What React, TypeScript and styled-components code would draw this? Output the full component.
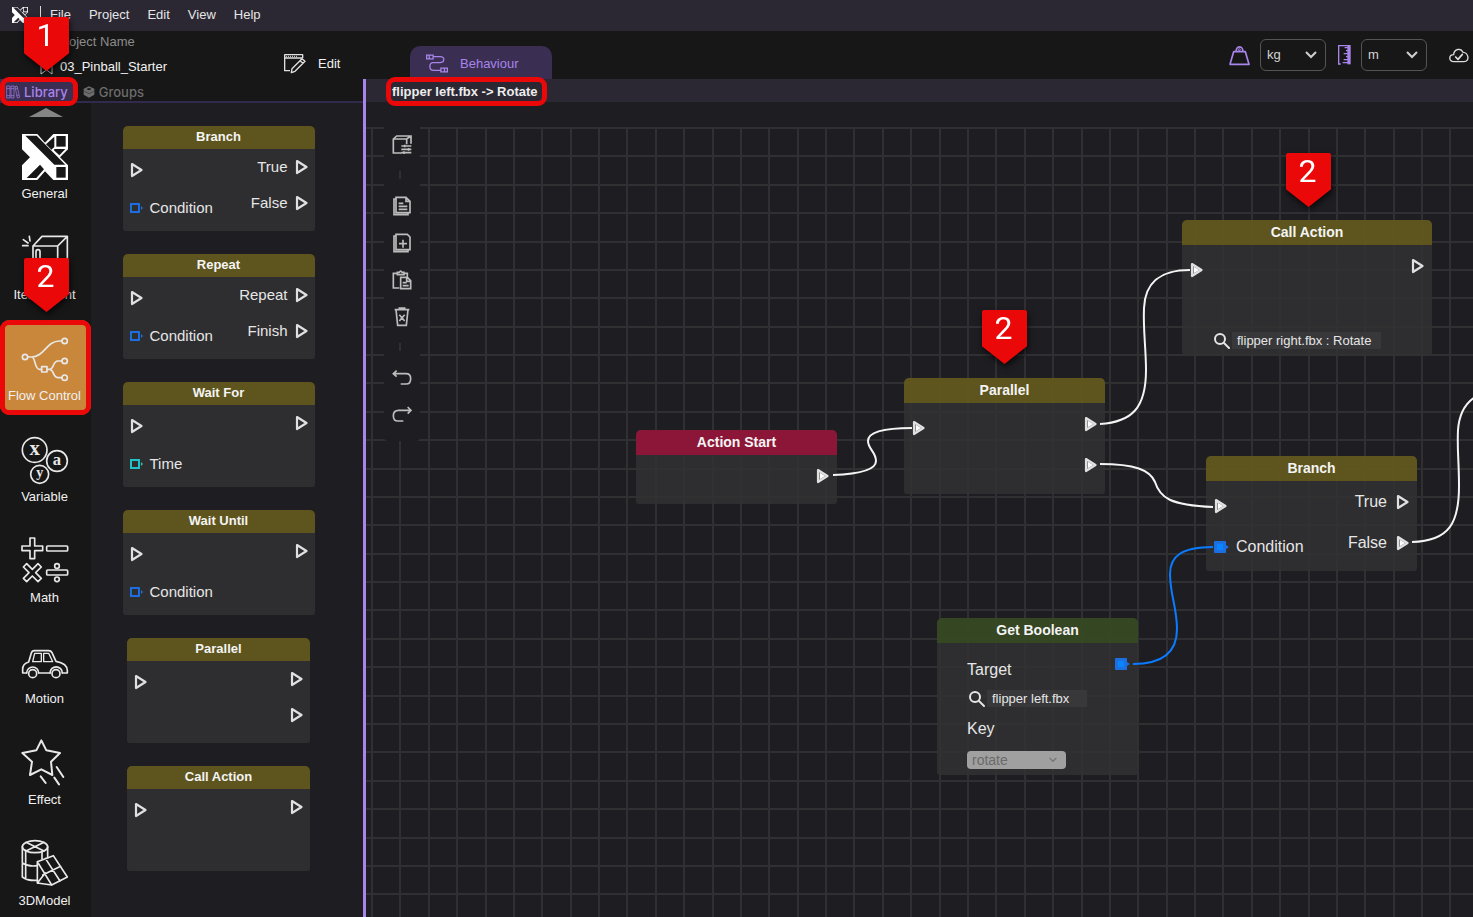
import React from "react";
import styled, { createGlobalStyle, css } from "styled-components";

const GRID_STEP = 28.38;

const colors = {
  menu: "#2b2833",
  header: "#171717",
  canvas: "#1e1d22",
  line: "#303033",
  violet: "#a885ea",
  violetDark: "#3a2e52",
  olive: "rgba(97, 86, 28, 0.96)",
  crimson: "#8c1637",
  green: "rgba(54, 72, 34, 0.96)",
  red: "#ea0808",
  blue: "#1b6fe0",
  cyan: "#20c4c4",
  text: "#e6e6e6",
};

const GlobalStyle = createGlobalStyle`
  *, *::before, *::after { box-sizing: border-box; }
  body {
    margin: 0;
    background: ${colors.canvas};
    color: ${colors.text};
    font-family: "Liberation Sans", Arial, sans-serif;
    font-size: 13px;
    line-height: 16px;
    overflow: hidden;
  }
  button, select, input { font: inherit; color: inherit; }
  button { background: none; border: 0; padding: 0; cursor: pointer; }
  svg { display: block; flex: none; }
`;

/* ---------- page frame ---------- */

const Page = styled.div`
  display: flex;
  flex-direction: column;
  height: 100vh;
`;

const MenuBar = styled.nav`
  display: flex;
  align-items: center;
  flex: none;
  height: 31px;
  padding: 0 12px 1px;
  background: ${colors.menu};
`;

const MenuDivider = styled.span`
  width: 1px;
  height: 18px;
  margin: 0 9px 0 12px;
  background: #d8d8d8;
`;

const MenuList = styled.div`
  display: flex;
  gap: 18px;
`;

const Header = styled.header`
  display: flex;
  flex: none;
  height: 48px;
  background: ${colors.header};
`;

const ProjectInfo = styled.div`
  position: relative;
  display: flex;
  flex-direction: column;
  justify-content: center;
  gap: 8px;
  width: 284px;
  padding-left: 39px;
`;

const ProjectCaption = styled.span`
  padding-left: 17px;
  color: #8c8c8c;
`;

const ProjectName = styled.span`
  display: flex;
  align-items: center;
  gap: 6px;
  color: #f2f2f2;
`;

const EditButton = styled.button`
  display: flex;
  align-items: center;
  gap: 12px;
  width: 126px;
  padding-top: 17px;
  color: #f0f0f0;
`;

const ModeTab = styled.button`
  display: flex;
  align-items: center;
  align-self: flex-end;
  gap: 12px;
  width: 142px;
  height: 33px;
  padding: 2px 0 0 16px;
  border-radius: 10px 10px 0 0;
  background: ${colors.violetDark};
  color: ${colors.violet};
`;

const UnitTools = styled.div`
  display: flex;
  align-items: center;
  margin-left: auto;
  padding-right: 4px;
`;

const UnitField = styled.label`
  position: relative;
  display: flex;
  align-items: center;
  gap: 10px;
  margin-right: 12px;
`;

const UnitSelect = styled.select`
  appearance: none;
  width: 66px;
  height: 32px;
  padding: 0 6px;
  border: 1px solid #555;
  border-radius: 6px;
  background: ${colors.header};
  color: #d4d4d4;
`;

const SelectArrow = styled.svg`
  position: absolute;
  right: 9px;
  top: 50%;
  translate: 0 -50%;
  pointer-events: none;
`;

const CloudButton = styled.button`
  padding-left: 10px;
`;

const Workspace = styled.div`
  display: flex;
  flex: 1;
  min-height: 0;
`;

/* ---------- left panel ---------- */

const LeftPanel = styled.aside`
  display: flex;
  flex-direction: column;
  flex: none;
  width: 366px;
  border-right: 3px solid ${colors.violet};
`;

const PanelTabs = styled.div`
  position: relative;
  display: flex;
  align-items: center;
  flex: none;
  gap: 9px;
  height: 24px;
  border-bottom: 2px solid #322a4c;
  background: ${colors.header};
`;

const PanelTab = styled.button<{ $active?: boolean }>`
  display: flex;
  align-items: center;
  gap: 4px;
  height: 22px;
  padding: ${(p) => (p.$active ? "3px 6px 0" : "3px 0 0")};
  font-family: Inter, sans-serif;
  font-weight: 500;
  color: ${(p) => (p.$active ? colors.violet : "#6c6c6c")};
  background: ${(p) => (p.$active ? colors.violetDark : "none")};
`;

const PanelBody = styled.div`
  display: flex;
  flex: 1;
  min-height: 0;
  overflow: hidden;
`;

const CategoryRail = styled.div`
  display: flex;
  flex-direction: column;
  align-items: center;
  gap: 6px;
  flex: none;
  width: 91px;
  background: ${colors.header};
`;

const ScrollUp = styled.button`
  display: flex;
  align-items: center;
  justify-content: center;
  flex: none;
  width: 100%;
  height: 9px;
  padding-top: 9px;
`;

const Category = styled.button<{ $active?: boolean }>`
  position: relative;
  display: flex;
  flex-direction: column;
  align-items: center;
  flex: none;
  gap: 6px;
  width: 100%;
  height: 95px;
  padding: 16px 2px 0 0;
  white-space: nowrap;
  color: #f0f0f0;
  border-radius: 10px;
  background: ${(p) => (p.$active ? "#c8873b" : "transparent")};
`;

const BlockList = styled.div`
  display: flex;
  flex-direction: column;
  align-items: center;
  gap: 23px;
  flex: 1;
  padding: 23px 17px 0 0;
  overflow: hidden;
`;

/* ---------- nodes ---------- */

const NodeFrame = styled.article<{ $w: number; $h: number; $large?: boolean; $x?: number; $y?: number }>`
  display: flex;
  flex-direction: column;
  flex: none;
  width: ${(p) => p.$w}px;
  height: ${(p) => p.$h}px;
  border-radius: 5px 5px 3px 3px;
  overflow: hidden;
  background: rgba(49, 49, 50, 0.88);
  font-size: ${(p) => (p.$large ? 16 : 15)}px;
  ${(p) =>
    p.$large &&
    css`
      position: absolute;
      left: ${p.$x}px;
      top: ${p.$y}px;
    `}
`;

const NodeTitle = styled.h3<{ $tone: string; $large?: boolean }>`
  flex: none;
  margin: 0;
  height: ${(p) => (p.$large ? 25 : 23)}px;
  line-height: ${(p) => (p.$large ? 25 : 22)}px;
  font-size: ${(p) => (p.$large ? 14 : 13)}px;
  font-weight: 700;
  text-align: center;
  color: #f4f4f4;
  background: ${(p) => p.$tone};
`;

const NodeBody = styled.div<{ $large?: boolean }>`
  display: flex;
  justify-content: space-between;
  padding: 0 ${(p) => (p.$large ? 8 : 7)}px;
`;

const PortColumn = styled.div<{ $side: "in" | "out"; $large?: boolean }>`
  display: flex;
  flex-direction: column;
  align-items: ${(p) => (p.$side === "in" ? "flex-start" : "flex-end")};
  padding-top: ${(p) => (p.$side === "out" ? 0 : p.$large ? 4 : 2)}px;
`;

const PortRow = styled.div<{ $side: "in" | "out"; $large?: boolean }>`
  display: flex;
  align-items: center;
  gap: ${(p) => (p.$side === "out" && p.$large ? 9 : 7)}px;
  height: ${(p) => (p.$large ? 41 : p.$side === "in" ? 38 : 36)}px;
`;

const NodeForm = styled.div<{ $top: number }>`
  display: flex;
  flex-direction: column;
  align-items: flex-start;
  gap: 12px;
  padding: ${(p) => p.$top}px 0 0 30px;
  line-height: 20px;
`;

const TargetHeading = styled.div`
  display: flex;
  justify-content: space-between;
  align-items: flex-start;
  padding: 15px 8px 0 30px;
  line-height: 24px;
`;

const TargetRow = styled.div`
  display: flex;
  align-items: center;
  gap: 2px;
  padding-left: 2px;
`;

const TargetValue = styled.button<{ $w: number }>`
  width: ${(p) => p.$w}px;
  height: 17px;
  padding-left: 5px;
  text-align: left;
  font-size: 13px;
  line-height: 17px;
  background: #38383a;
`;

const KeyField = styled.span`
  position: relative;
  display: flex;
`;

const KeySelect = styled.select`
  appearance: none;
  width: 99px;
  height: 18px;
  padding: 0 5px;
  border: 0;
  border-radius: 4px;
  background: #a0a0a0;
  color: #6a6a6a;
  font-size: 14px;
  line-height: 18px;
`;

/* ---------- canvas ---------- */

const CanvasPane = styled.main`
  display: flex;
  flex-direction: column;
  flex: 1;
  min-width: 0;
`;

const Breadcrumb = styled.div`
  position: relative;
  z-index: 2;
  display: flex;
  align-items: center;
  flex: none;
  height: 23px;
  padding: 2px 0 0 26px;
  background: ${colors.menu};
  font-weight: 700;
  color: #ededed;
`;

const Board = styled.div`
  position: relative;
  flex: 1;
  overflow: hidden;
  background: ${colors.canvas};
`;

const BoardLayer = styled.svg`
  position: absolute;
  inset: 0;
  width: 100%;
  height: 100%;
`;

const ToolRail = styled.div`
  position: absolute;
  left: 18px;
  top: 16px;
  display: flex;
  flex-direction: column;
  gap: 8px;
`;

const ToolGroup = styled.div`
  display: flex;
  flex-direction: column;
  padding: 8px 0;
  border-radius: 4px;
  background: ${colors.canvas};
`;

const ToolButton = styled.button`
  display: flex;
  align-items: center;
  justify-content: center;
  width: 36px;
  height: 37px;
`;

/* ---------- tutorial callouts ---------- */

const Outline = styled.span<{ $x: number; $y: number; $w: number; $h: number }>`
  position: absolute;
  z-index: 3;
  left: ${(p) => p.$x}px;
  top: ${(p) => p.$y}px;
  width: ${(p) => p.$w}px;
  height: ${(p) => p.$h}px;
  border: 5px solid ${colors.red};
  border-radius: 9px;
  pointer-events: none;
`;

const Pin = styled.span<{ $x: number; $y: number }>`
  position: absolute;
  z-index: 4;
  left: ${(p) => p.$x}px;
  top: ${(p) => p.$y}px;
  width: 45px;
  height: 54px;
  padding-right: 2px;
  filter: drop-shadow(1px 3px 3px rgba(0, 0, 0, 0.7));
  font-family: Roboto, sans-serif;
  font-size: 32px;
  line-height: 36px;
  text-align: center;
  color: #fff;
  pointer-events: none;

  &::before {
    content: "";
    position: absolute;
    inset: 0;
    z-index: -1;
    background: ${colors.red};
    border-radius: 2px;
    clip-path: polygon(0 0, 100% 0, 100% 67%, 50% 100%, 0 67%);
  }
`;

/* ---------- icons ---------- */

const BrandMark = ({ size, dark }: { size: number; dark: string }) => (
  <svg width={size} height={size} viewBox="0 0 138 138" aria-hidden="true">
    <path fill="#fff" d="M0 0H46L69 26L94 0H138V46L114 70L138 94V138H94L69 112L46 138H0V94L24 70L0 46Z" />
    <g fill={dark}>
      <path d="M10 5H44L130 92H97Z" />
      <path d="M14 132L54 92L66 106L43 132Z" />
      <path d="M103 6H131V38H103Z" />
      <path d="M97 8V39L88 47L72 31Z" />
      <path d="M98 45H130L112 64L95 48Z" />
      <path d="M103 99H131V131H103Z" />
    </g>
  </svg>
);

const RailIcon = ({ y, children }: { y: number; children: React.ReactNode }) => (
  <svg
    width="46"
    height="46"
    viewBox={`66 ${y} 138 138`}
    overflow="visible"
    fill="none"
    stroke="#e8e8e8"
    strokeWidth="5"
    strokeLinejoin="round"
    strokeLinecap="round"
    aria-hidden="true"
  >
    {children}
  </svg>
);

const ItemIcon = () => (
  <RailIcon y={404}>
    <path d="M99 437L126 408H202V500L173 530H99ZM99 437H173L202 408M173 437V530M108 475V454Q108 448 114 448Q120 448 120 454V475M68 436H84M70 418L84 428M88 408L90 422" />
  </RailIcon>
);

const FlowIcon = () => (
  <RailIcon y={80}>
    <circle cx="75" cy="143" r="8" />
    <circle cx="194" cy="95" r="8" />
    <circle cx="194" cy="155" r="8" />
    <circle cx="194" cy="205" r="8" />
    <rect x="125" y="172" width="16" height="16" />
    <path d="M83 143H95C132 143 140 95 178 95H186M95 143C107 143 103 180 118 180H125M141 180H149C162 180 158 155 174 155H186M149 180C162 180 158 205 174 205H186" />
  </RailIcon>
);

const VariableIcon = () => (
  <RailIcon y={378}>
    <circle cx="104" cy="417" r="37" />
    <circle cx="171" cy="450" r="31" />
    <circle cx="119" cy="490" r="27" />
    <g fill="#e8e8e8" stroke="none" fontFamily="Liberation Serif, serif" fontWeight="700" textAnchor="middle">
      <text x="104" y="432" fontSize="62">x</text>
      <text x="171" y="462" fontSize="50">a</text>
      <text x="119" y="498" fontSize="42">y</text>
    </g>
  </RailIcon>
);

const MathIcon = () => {
  const plus = "M-7 -31H7V-7H31V7H7V31H-7V7H-31V-7H-7Z";
  return (
    <RailIcon y={53}>
      <path transform="translate(97 84)" d={plus} />
      <path transform="translate(97 157) rotate(45)" d={plus} />
      <rect x="140" y="77" width="63" height="15" rx="3" />
      <rect x="140" y="149" width="63" height="15" rx="3" />
      <circle cx="171" cy="137" r="7" />
      <circle cx="171" cy="177" r="7" />
    </RailIcon>
  );
};

const CarIcon = () => (
  <RailIcon y={355}>
    <path d="M80 457H68V446C68 432 75 427 86 424L94 397Q96 390 103 390H146Q153 390 156 396L168 422C192 426 202 435 202 450V457H187M116 457H151" />
    <path d="M98 423L104 398H124V423ZM131 398H146L158 423H131Z" strokeWidth="4" />
    <path d="M80 457A18 18 0 0 1 116 457M150 457A18 18 0 0 1 187 457" />
    <circle cx="98" cy="459" r="12" />
    <circle cx="168" cy="459" r="12" />
  </RailIcon>
);

const StarIcon = () => (
  <RailIcon y={59}>
    <path d="M124 60L139 90L180 98L153 124L157 164L124 147L90 164L96 124L67 98L109 90Z" strokeWidth="6" />
    <path d="M122 168L137 188M163 172L177 192M170 140L190 170" strokeWidth="6" />
  </RailIcon>
);

const ModelIcon = () => (
  <RailIcon y={360}>
    <g strokeWidth="5">
      <ellipse cx="105" cy="377" rx="38" ry="18" />
      <path d="M67 377V468Q82 480 112 478M143 377V410M77 388V474M126 394V414M67 426Q85 438 112 434M78 364L132 390M132 364L78 390" />
      <path d="M112 422L160 404L202 468L155 492L112 486ZM112 422L155 492M112 486L136 456M136 412L180 480M128 462L182 436" />
    </g>
  </RailIcon>
);

const BookmarkIcon = () => (
  <svg width="15" height="18" viewBox="0 0 15 18" fill="none" stroke="#cfcfcf" aria-hidden="true">
    <path d="M2 1H13V16L7.500 12L2 16Z" />
  </svg>
);

const EditIcon = () => (
  <svg width="22" height="20" viewBox="0 0 66 60" fill="none" stroke="#e0e0e0" strokeWidth="4" strokeLinejoin="round" aria-hidden="true">
    <path d="M56 12V2H2V50H18M2 12H56" />
    <path d="M22 56L24 44L54 14L63 22L33 52ZM48 20L57 28" />
    <path d="M6 7H40" strokeDasharray="3 3" strokeWidth="3" />
  </svg>
);

const CableIcon = () => (
  <svg width="22" height="19" viewBox="0 0 68 58" fill="none" stroke={colors.violet} strokeWidth="4" aria-hidden="true">
    <path d="M2 3H22V15H2ZM10 3V15M46 43H66V55H46ZM57 43V55" />
    <path d="M22 8H44Q55 8 55 17Q55 26 44 26H22Q12 26 12 38Q12 50 24 50H46" />
  </svg>
);

const WeightIcon = () => (
  <svg width="21" height="21" viewBox="0 0 63 63" fill="none" stroke={colors.violet} strokeWidth="5" strokeLinejoin="round" aria-hidden="true">
    <path d="M14 20H49L60 58H3Z" />
    <path d="M22 20A10 11 0 1 1 41 20" />
    <circle cx="31" cy="14" r="3" strokeWidth="3" />
  </svg>
);

const RulerIcon = () => (
  <svg width="13" height="20" viewBox="0 0 39 60" fill="none" stroke={colors.violet} strokeWidth="4" aria-hidden="true">
    <path d="M2 59V2H30M2 57H8" />
    <path d="M33 0V58" strokeWidth="10" />
    <path d="M20 8H36M24 17H36M17 26H36M24 35H36M17 44H36M14 53H36" />
  </svg>
);

const CloudIcon = () => (
  <svg width="20" height="15" viewBox="0 0 60 45" fill="none" stroke="#dcdcdc" strokeWidth="4" strokeLinejoin="round" strokeLinecap="round" aria-hidden="true">
    <path d="M14 41C-2 41 -1 20 14 20C15 2 36 -1 42 13C58 12 64 41 45 41Z" />
    <path d="M20 27L27 34L40 19" strokeWidth="5" />
  </svg>
);

const BooksIcon = () => (
  <svg width="14" height="14" viewBox="0 0 42 42" fill="none" stroke={colors.violet} strokeWidth="2" aria-hidden="true">
    <path d="M2 3H12V39H2ZM15 3H24V39H15ZM27 5L33 3L41 37L34 39ZM2 11H12M2 32H12M15 11H24M15 32H24M29 12L35 10M32 32L39 30" />
  </svg>
);

const StackIcon = () => (
  <svg width="12" height="12" viewBox="0 0 36 36" aria-hidden="true">
    <path fill="#6c6c6c" d="M18 1L34 8V26L18 35L2 26V8Z" />
    <path fill="#171717" d="M10 9L18 6L26 9L18 13Z" />
    <path fill="none" stroke="#3a3a3a" strokeWidth="2" d="M2 15L18 23L34 15" />
  </svg>
);

const SearchIcon = () => (
  <svg width="16" height="16" viewBox="0 0 16 16" fill="none" stroke="#e4e4e4" strokeWidth="2" strokeLinecap="round" aria-hidden="true">
    <circle cx="6" cy="6" r="5" />
    <path d="M10 10L15 15" />
  </svg>
);

const Chevron = ({ color = "#cfcfcf", width = 12 }) => (
  <SelectArrow width={width} height={width} viewBox="0 0 12 12" fill="none" stroke={color} strokeWidth="2" aria-hidden="true">
    <path d="M1 3L6 8L11 3" />
  </SelectArrow>
);

const toolStroke = {
  width: 20,
  height: 20,
  viewBox: "0 0 60 60",
  fill: "none",
  stroke: "#bdbdbd",
  strokeWidth: 5,
  "aria-hidden": true,
} as const;

const BoxListIcon = () => (
  <svg {...toolStroke}>
    <path d="M30 54H4V12L14 3H57V26M4 12H44L57 3M44 12V28M28 33H58M28 43H58M28 53H58M38 29V37M50 39V47M36 49V57" />
  </svg>
);
const CopyIcon = () => (
  <svg {...toolStroke}>
    <path d="M12 4H42L54 16V50H12ZM42 4V16H54M12 9H6V56H48V50M20 22H34M20 31H46M20 40H46" />
  </svg>
);
const AddIcon = () => (
  <svg {...toolStroke}>
    <path d="M12 4H46L54 12V50H12ZM12 9H6V56H48V50M33 20V44M21 32H45" />
  </svg>
);
const PasteIcon = () => (
  <svg {...toolStroke}>
    <path d="M22 54H4V10H16M36 10H46V20M16 14V7H22Q26 0 30 7H36V14ZM26 22H46L56 32V56H26ZM44 22V34H56M32 38H44M32 47H50" />
  </svg>
);
const TrashIcon = () => (
  <svg {...toolStroke}>
    <path d="M8 8H52M22 8V3H38V8M12 8L17 55H43L48 8M22 23L38 42M38 23L22 42" />
  </svg>
);
const UndoIcon = () => (
  <svg {...toolStroke}>
    <path d="M14 8L4 17L14 26M4 17H42Q56 17 56 32Q56 48 42 48H26" />
  </svg>
);
const RedoIcon = () => (
  <svg {...toolStroke}>
    <path d="M47 6L57 16L47 26M57 16H20Q4 16 4 32Q4 48 18 48H34" />
  </svg>
);

type PortKind = "flow" | "flowLinked" | "bool" | "boolLinked" | "time";

const PortGlyph = ({ kind }: { kind: PortKind }) => {
  if (kind === "flow" || kind === "flowLinked") {
    const linked = kind === "flowLinked";
    return (
      <svg width="13" height="16" viewBox="0 0 13 16" aria-hidden="true">
        <path
          d="M2 2L11.500 8L2 14Z"
          fill={linked ? "#8a8a8a" : "none"}
          stroke="#e0e0e0"
          strokeWidth="2.200"
          strokeLinejoin="round"
        />
        {linked && <path d="M4 5L9 8L4 11Z" fill="#fff" />}
      </svg>
    );
  }
  const color = kind === "time" ? colors.cyan : colors.blue;
  const linked = kind === "boolLinked";
  return linked ? (
    <svg width="15" height="12" viewBox="0 0 15 12" aria-hidden="true">
      <rect x="0" y="0" width="12" height="12" rx="1" fill={color} />
      <rect x="3" y="3" width="6" height="6" fill="#0a84ff" />
      <path d="M12 4L15 6L12 8Z" fill={color} />
    </svg>
  ) : (
    <svg width="13" height="10" viewBox="0 0 13 10" aria-hidden="true">
      <rect x="1" y="1" width="8" height="8" fill="none" stroke={color} strokeWidth="2" />
      <path d="M11 3L13 5L11 7Z" fill={color} />
    </svg>
  );
};

/* ---------- node component ---------- */

type Port = { kind: PortKind; label?: string };

type NodeProps = {
  title: string;
  w: number;
  h: number;
  x?: number;
  y?: number;
  large?: boolean;
  tone?: string;
  ins?: Port[];
  outs?: Port[];
  children?: React.ReactNode;
};

const Node = ({ title, w, h, x, y, large, tone = colors.olive, ins = [], outs = [], children }: NodeProps) => (
  <NodeFrame $w={w} $h={h} $x={x} $y={y} $large={large}>
    <NodeTitle $tone={tone} $large={large}>
      {title}
    </NodeTitle>
    {(ins.length > 0 || outs.length > 0) && (
      <NodeBody $large={large}>
        <PortColumn $side="in" $large={large}>
          {ins.map((port, i) => (
            <PortRow key={i} $side="in" $large={large}>
              <PortGlyph kind={port.kind} />
              {port.label}
            </PortRow>
          ))}
        </PortColumn>
        <PortColumn $side="out" $large={large}>
          {outs.map((port, i) => (
            <PortRow key={i} $side="out" $large={large}>
              {port.label}
              <PortGlyph kind={port.kind} />
            </PortRow>
          ))}
        </PortColumn>
      </NodeBody>
    )}
    {children}
  </NodeFrame>
);

const flow: Port = { kind: "flow" };
const linked: Port = { kind: "flowLinked" };

const libraryBlocks: NodeProps[] = [
  { title: "Branch", w: 192, h: 105, ins: [flow, { kind: "bool", label: "Condition" }], outs: [{ kind: "flow", label: "True" }, { kind: "flow", label: "False" }] },
  { title: "Repeat", w: 192, h: 105, ins: [flow, { kind: "bool", label: "Condition" }], outs: [{ kind: "flow", label: "Repeat" }, { kind: "flow", label: "Finish" }] },
  { title: "Wait For", w: 192, h: 105, ins: [flow, { kind: "time", label: "Time" }], outs: [flow] },
  { title: "Wait Until", w: 192, h: 105, ins: [flow, { kind: "bool", label: "Condition" }], outs: [flow] },
  { title: "Parallel", w: 183, h: 105, ins: [flow], outs: [flow, flow] },
  { title: "Call Action", w: 183, h: 105, ins: [flow], outs: [flow] },
];

const categories = [
  { label: "General", icon: <BrandMark size={46} dark={colors.header} /> },
  { label: "Item Event", icon: <ItemIcon />, pin: "2" },
  { label: "Flow Control", icon: <FlowIcon />, active: true },
  { label: "Variable", icon: <VariableIcon /> },
  { label: "Math", icon: <MathIcon /> },
  { label: "Motion", icon: <CarIcon /> },
  { label: "Effect", icon: <StarIcon /> },
  { label: "3DModel", icon: <ModelIcon /> },
];

const toolGroups = [
  [{ name: "Properties", icon: <BoxListIcon /> }],
  [
    { name: "Copy", icon: <CopyIcon /> },
    { name: "Duplicate", icon: <AddIcon /> },
    { name: "Paste", icon: <PasteIcon /> },
    { name: "Delete", icon: <TrashIcon /> },
  ],
  [
    { name: "Undo", icon: <UndoIcon /> },
    { name: "Redo", icon: <RedoIcon /> },
  ],
];

const Grid = () => {
  const steps = Array.from({ length: 100 }, (_, i) => Math.round(i * GRID_STEP));
  return (
    <BoardLayer aria-hidden="true" fill={colors.line}>
      {steps.map((s) => (
        <rect key={`v${s}`} x={5 + s} y="26" width="2" height="100%" />
      ))}
      {steps.map((s) => (
        <rect key={`h${s}`} x="0" y={25 + s} width="100%" height="2" />
      ))}
    </BoardLayer>
  );
};

const wires = [
  "M467 373C494 372 510 368 510 359C510 350 502 347 502 339C502 330 518 326 546 326",
  "M734 322C766 320 780 306 780 268C780 246 777 228 778 206C779 182 792 168 824 168",
  "M734 362C769 362 784 368 789 380C794 396 804 403 847 405",
  "M1046 440C1084 439 1093 420 1093 384C1093 358 1091 348 1092 328C1093 314 1098 302 1109 295",
];

export default function App() {
  return (
    <Page>
      <GlobalStyle />
      <MenuBar>
        <BrandMark size={16} dark={colors.menu} />
        <MenuDivider />
        <MenuList>
          {["File", "Project", "Edit", "View", "Help"].map((item) => (
            <button key={item}>{item}</button>
          ))}
        </MenuList>
      </MenuBar>

      <Header>
        <ProjectInfo>
          <ProjectCaption>Project Name</ProjectCaption>
          <ProjectName>
            <BookmarkIcon />
            03_Pinball_Starter
          </ProjectName>
          <Pin $x={24} $y={-14}>1</Pin>
        </ProjectInfo>
        <EditButton>
          <EditIcon />
          Edit
        </EditButton>
        <ModeTab>
          <CableIcon />
          Behaviour
        </ModeTab>
        <UnitTools>
          <UnitField>
            <WeightIcon />
            <UnitSelect aria-label="Mass unit" defaultValue="kg">
              <option>kg</option>
            </UnitSelect>
            <Chevron />
          </UnitField>
          <UnitField>
            <RulerIcon />
            <UnitSelect aria-label="Length unit" defaultValue="m">
              <option>m</option>
            </UnitSelect>
            <Chevron />
          </UnitField>
          <CloudButton aria-label="Cloud status">
            <CloudIcon />
          </CloudButton>
        </UnitTools>
      </Header>

      <Workspace>
        <LeftPanel>
          <PanelTabs>
            <PanelTab $active>
              <BooksIcon />
              Library
            </PanelTab>
            <PanelTab>
              <StackIcon />
              Groups
            </PanelTab>
            <Outline $x={0} $y={-2} $w={78} $h={29} />
          </PanelTabs>
          <PanelBody>
            <CategoryRail>
              <ScrollUp aria-label="Scroll up">
                <svg width="34" height="9" viewBox="0 0 34 9" aria-hidden="true">
                  <path fill="#858585" d="M17 0L34 9H0Z" />
                </svg>
              </ScrollUp>
              {categories.map((c) => (
                <Category key={c.label} $active={c.active}>
                  {c.icon}
                  {c.label}
                  {c.active && <Outline $x={0} $y={0} $w={91} $h={95} />}
                  {c.pin && <Pin $x={24} $y={39}>{c.pin}</Pin>}
                </Category>
              ))}
            </CategoryRail>
            <BlockList>
              {libraryBlocks.map((b) => (
                <Node key={b.title} {...b} />
              ))}
            </BlockList>
          </PanelBody>
        </LeftPanel>

        <CanvasPane>
          <Breadcrumb>
            flipper left.fbx -&gt; Rotate
            <Outline $x={20} $y={-2} $w={161} $h={29} />
          </Breadcrumb>
          <Board>
            <Grid />
            <ToolRail>
              {toolGroups.map((group, i) => (
                <ToolGroup key={i}>
                  {group.map((tool) => (
                    <ToolButton key={tool.name} aria-label={tool.name}>
                      {tool.icon}
                    </ToolButton>
                  ))}
                </ToolGroup>
              ))}
            </ToolRail>

            <Node large title="Action Start" tone={colors.crimson} x={270} y={328} w={201} h={74} outs={[linked]} />
            <Node large title="Parallel" x={538} y={276} w={201} h={116} ins={[linked]} outs={[linked, linked]} />
            <Node large title="Call Action" x={816} y={118} w={250} h={135} ins={[linked]} outs={[flow]}>
              <NodeForm $top={42}>
                <TargetRow>
                  <SearchIcon />
                  <TargetValue $w={149}>flipper right.fbx : Rotate</TargetValue>
                </TargetRow>
              </NodeForm>
            </Node>
            <Node
              large
              title="Branch"
              x={840}
              y={354}
              w={211}
              h={115}
              ins={[linked, { kind: "boolLinked", label: "Condition" }]}
              outs={[{ kind: "flow", label: "True" }, { kind: "flowLinked", label: "False" }]}
            />
            <Node large title="Get Boolean" tone={colors.green} x={571} y={516} w={201} h={157}>
              <TargetHeading>
                Target
                <PortGlyph kind="boolLinked" />
              </TargetHeading>
              <NodeForm $top={8}>
                <TargetRow>
                  <SearchIcon />
                  <TargetValue $w={100}>flipper left.fbx</TargetValue>
                </TargetRow>
                <label htmlFor="key">Key</label>
                <KeyField>
                  <KeySelect id="key" defaultValue="rotate">
                    <option>rotate</option>
                  </KeySelect>
                  <Chevron color="#777" width={8} />
                </KeyField>
              </NodeForm>
            </Node>

            <BoardLayer fill="none" strokeWidth="2" pointerEvents="none" aria-hidden="true">
              {wires.map((d) => (
                <path key={d} d={d} stroke="#f4f4f4" />
              ))}
              <path d="M767 562C794 562 811 552 811 527C811 506 804 492 804 472C804 454 816 445 847 445" stroke="#0a7cff" />
            </BoardLayer>

            <Pin $x={616} $y={208}>2</Pin>
            <Pin $x={920} $y={51}>2</Pin>
          </Board>
        </CanvasPane>
      </Workspace>
    </Page>
  );
}
